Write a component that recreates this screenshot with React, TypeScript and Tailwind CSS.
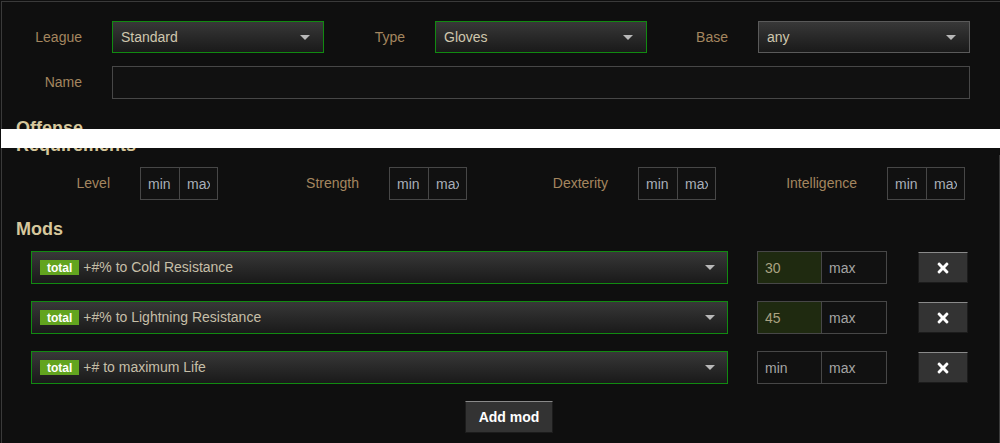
import React from "react";
import { FaTimes } from "react-icons/fa";

const font = { fontFamily: '"Liberation Sans", Arial, sans-serif' };

function Arrow() {
  return (
    <svg width="10" height="5" viewBox="0 0 10 5" className="shrink-0">
      <polygon points="0,0 10,0 5,5" fill="#b8b8b8" />
    </svg>
  );
}

function Select({ value, green }: { value: string; green?: boolean }) {
  return (
    <div
      className={`flex h-[32px] w-[212px] items-center justify-between border bg-gradient-to-b from-[#383838] to-[#1a1a1a] pl-[8px] pr-[13px] text-[14px] text-[#cfc7ae] ${
        green ? "border-[#118a11]" : "border-[#5a5a5a]"
      }`}
    >
      <span>{value}</span>
      <Arrow />
    </div>
  );
}

function Field({ label, value, green }: { label: string; value: string; green?: boolean }) {
  return (
    <div className="flex items-center">
      <div className="flex-1 pr-[30px] text-right text-[14px] text-[#a4865f]">{label}</div>
      <Select value={value} green={green} />
    </div>
  );
}

function ReqField({ label }: { label: string }) {
  return (
    <div className="flex items-center">
      <div className="w-[108px] text-right text-[14px] text-[#a4865f]">{label}</div>
      <div className="ml-[30px] flex h-[33px]">
        <input
          placeholder="min"
          className="h-full w-[40px] border border-[#474747] bg-[#111111] pl-[7px] pr-[7px] text-[14px] text-[#a8aeb8] outline-none placeholder:text-[#a8aeb8]"
        />
        <input
          placeholder="max"
          className="-ml-px h-full w-[39px] border border-[#474747] bg-[#111111] pl-[7px] pr-[7px] text-[14px] text-[#a8aeb8] outline-none placeholder:text-[#a8aeb8]"
        />
      </div>
    </div>
  );
}

function ModRow({ text, min }: { text: string; min?: string }) {
  return (
    <div className="flex items-center pl-[29px]">
      <div className="flex h-[33px] w-[697px] items-center border border-[#118a11] bg-gradient-to-b from-[#383838] to-[#1a1a1a] pl-[8px] pr-[12px]">
        <span className="flex h-[15px] items-center bg-[#62a41f] px-[7px] text-[12px] font-bold text-white">total</span>
        <span className="ml-[4px] flex-1 text-[14px] text-[#c6bfa8]">{text}</span>
        <Arrow />
      </div>
      <div className="ml-[29px] flex h-[33px]">
        <input
          defaultValue={min}
          placeholder="min"
          className={`h-full w-[65px] border border-[#474747] pl-[7px] text-[14px] text-[#aaa382] outline-none placeholder:text-[#a4a4a4] ${
            min ? "bg-[#1f2a10]" : "bg-[#111111]"
          }`}
        />
        <input
          placeholder="max"
          className="-ml-px h-full w-[66px] border border-[#474747] bg-[#111111] pl-[7px] text-[14px] text-[#a4a4a4] outline-none placeholder:text-[#a4a4a4]"
        />
      </div>
      <button className="ml-[31px] flex h-[31px] w-[50px] items-center justify-center border border-[#1c1c1c] border-t-[#8a8a8a] bg-[#333333] text-white">
        <FaTimes size={16} />
      </button>
    </div>
  );
}

export default function App() {
  return (
    <div style={font} className="h-[443px] w-[1000px] overflow-hidden bg-[#0f0f0f] pl-px pt-px">
      <div className="relative h-[442px] border-l border-t border-[#3a3a3a]">
        <div className="grid grid-cols-[322px_323px_323px] pt-[19px]">
          <Field label="League" value="Standard" green />
          <Field label="Type" value="Gloves" green />
          <Field label="Base" value="any" />
        </div>
        <div className="mt-[13px] flex items-center pr-[30px]">
          <div className="w-[80px] text-right text-[14px] text-[#a4865f]">Name</div>
          <input className="ml-[30px] h-[33px] flex-1 border border-[#474747] bg-[#111111] outline-none" />
        </div>

        <div className="relative mt-[19px]">
          <div className="h-[17px] pl-[14px] text-[18px] font-bold leading-[20px] text-[#d6c79c]">Offense</div>
          <div className="h-[20px] pl-[14px] text-[18px] font-bold leading-[20px] text-[#d6c79c]">Requirements</div>
          <div className="absolute left-[-1px] right-0 top-[11px] h-[19px] bg-white" />
        </div>

        <div className="border-r border-[#3a3a3a] pr-px">
          <div className="grid grid-cols-4 pt-[12px]">
            <ReqField label="Level" />
            <ReqField label="Strength" />
            <ReqField label="Dexterity" />
            <ReqField label="Intelligence" />
          </div>

          <div className="mt-[19px] h-[20px] pl-[14px] text-[18px] font-bold leading-[20px] text-[#d6c79c]">Mods</div>

          <div className="mt-[12px] flex flex-col gap-[17px]">
            <ModRow text="+#% to Cold Resistance" min="30" />
            <ModRow text="+#% to Lightning Resistance" min="45" />
            <ModRow text="+# to maximum Life" />
          </div>

          <div className="mt-[17px] pb-[20px] pl-[463px]">
            <button className="h-[32px] w-[88px] border border-[#1c1c1c] border-t-[#8a8a8a] bg-[#333333] text-[14px] font-bold text-white">
              Add mod
            </button>
          </div>
        </div>
      </div>
    </div>
  );
}
